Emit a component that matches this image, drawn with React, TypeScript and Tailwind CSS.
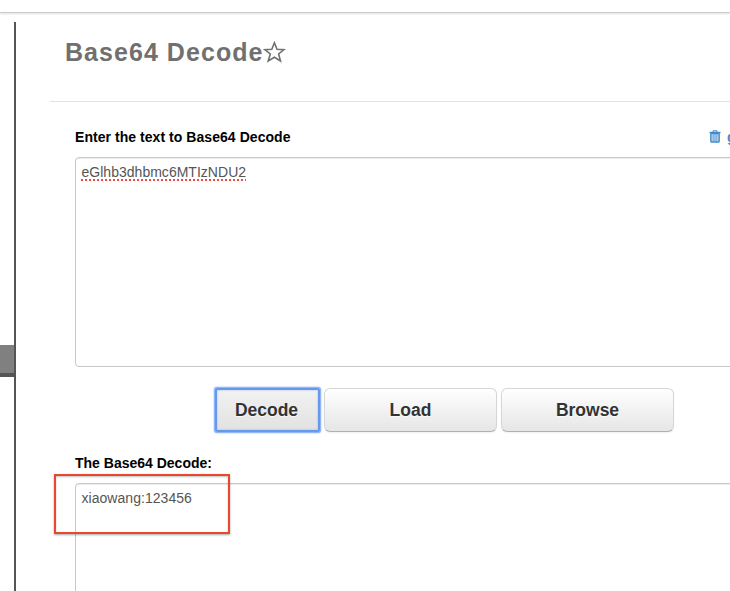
import React from "react";

function StarIcon() {
  return (
    <svg className="mt-[5px] h-[22px] w-[23px] shrink-0" viewBox="0 0 23 22" fill="none" stroke="#707070" strokeWidth="1.6">
      <path d="M11.4 1.8 L14 8.2 L21.1 8.6 L15.6 13 L17.5 19.9 L11.4 16.2 L5.2 19.9 L7.3 13 L1.8 8.6 L8.8 8.2 Z" />
    </svg>
  );
}

function TrashIcon() {
  return (
    <svg className="mt-px h-[13px] w-[12px] shrink-0" viewBox="0 0 12 13" fill="none">
      <path d="M4 2 V0.8 H8 V2" stroke="#428bca" strokeWidth="1" />
      <rect x="0.5" y="1.8" width="11" height="1.5" fill="#428bca" />
      <rect x="1.8" y="3.5" width="8.4" height="8.5" rx="0.5" fill="#b5d2eb" stroke="#428bca" strokeWidth="1.3" />
      <path d="M4.3 4.5V11M6 4.5V11M7.7 4.5V11" stroke="#659fd2" strokeWidth="0.7" />
    </svg>
  );
}

const button =
  "h-[44px] w-[173px] shrink-0 rounded-[6px] border border-[#d6d6d6] border-b-[#b0b0b0] bg-linear-to-b from-white to-[#e6e6e6] text-[17.5px] font-bold text-[#333] shadow-[0_1px_2px_rgba(0,0,0,0.06)] [text-shadow:0_1px_1px_rgba(255,255,255,0.75)]";

export default function App() {
  return (
    <div className="flex h-[591px] w-[730px] flex-col overflow-hidden bg-white font-['Liberation_Sans',Arial,sans-serif]">
      <header className="h-[13px] shrink-0 border-b border-[#ccc] shadow-[0_1px_2px_rgba(0,0,0,0.12)]" />
      <div className="mt-[9px] flex min-h-0 flex-1">
        <aside className="w-4 shrink-0 border-r-2 border-[#555] pt-[323px]">
          <div className="h-8 border-b-4 border-[#555] bg-[#808080]" />
        </aside>
        <main className="min-w-0 flex-1 overflow-hidden pl-[34px]">
          <div className="flex h-20 border-b border-[#e3e3e3] pl-[15px] pt-[14px]">
            <h1 className="text-[25px] leading-[32px] font-bold tracking-[1.05px] whitespace-nowrap text-[#707070]">Base64 Decode</h1>
            <StarIcon />
          </div>
          <section className="w-[720px] pl-[25px]">
            <div className="flex h-[55px] items-start pt-[27px]">
              <label className="w-[634px] shrink-0 text-[14px] leading-4 font-bold tracking-[0.05px] text-black">Enter the text to Base64 Decode</label>
              <TrashIcon />
              <span className="ml-[6px] text-[14px] leading-4 font-bold text-[#428bca]">g</span>
            </div>
            <div className="h-[210px] rounded-[4px] border border-[#c8c8c8] px-[5.5px] pt-[4px] text-[14px] leading-5 tracking-[0.02px] text-[#555] shadow-[inset_0_1px_1px_rgba(0,0,0,0.075)]">
              <span className="underline decoration-[#f04a43] decoration-dotted decoration-[2px] underline-offset-[2px] [text-decoration-skip-ink:none]">eGlhb3dhbmc6MTIzNDU2</span>
            </div>
            <div className="flex h-[86px] gap-1 pt-[21px] pl-[140px]">
              <button className="h-[44px] w-[105px] shrink-0 rounded-[2px] border-2 border-[#6699eb] bg-linear-to-b from-[#f2f2f2] to-[#e2e2e2] pr-[2px] text-[17.5px] font-bold text-[#333] shadow-[0_0_0_1px_#91b6f5,0_0_2px_1px_#8db4f8,inset_0_0_2px_#8fb4f4] [text-shadow:0_1px_1px_rgba(255,255,255,0.75)]">Decode</button>
              <button className={button}>Load</button>
              <button className={button}>Browse</button>
            </div>
            <div className="relative h-[140px]">
              <h2 className="h-[30px] pt-[2px] text-[14px] leading-4 font-bold text-black">The Base64 Decode:</h2>
              <div className="h-[160px] rounded-[4px] border border-[#c8c8c8] px-[5.5px] pt-[4px] text-[14px] leading-5 tracking-[0.04px] text-[#555] shadow-[inset_0_1px_1px_rgba(0,0,0,0.075)]">xiaowang:123456</div>
              <div className="absolute top-[21px] left-[-21px] h-[60px] w-[176px] border-2 border-[#e9472e] shadow-[0_1px_2px_rgba(0,0,0,0.35),inset_0_1px_2px_rgba(0,0,0,0.25)]" />
            </div>
          </section>
        </main>
      </div>
    </div>
  );
}
